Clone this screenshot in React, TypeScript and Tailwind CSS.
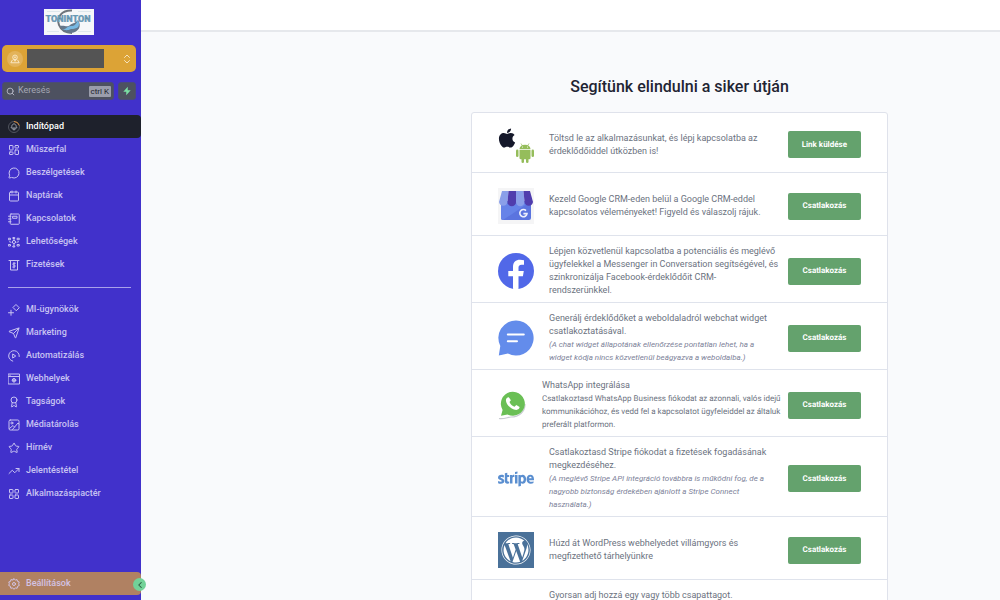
import type { ReactNode } from "react";
import {
  LayoutDashboard,
  MessageCircle,
  Calendar,
  Send,
  Award,
  Star,
  TrendingUp,
  LayoutGrid,
  Search,
  ChevronsUpDown,
  ChevronLeft,
} from "lucide-react";
import { FaApple, FaStripe, FaWordpress } from "react-icons/fa";

function Glyph({ children }: { children: ReactNode }) {
  return (
    <svg
      viewBox="0 0 24 24"
      className="size-3"
      fill="none"
      stroke="currentColor"
      strokeWidth="2"
      strokeLinecap="round"
      strokeLinejoin="round"
      aria-hidden="true"
    >
      {children}
    </svg>
  );
}

const icons: Record<string, ReactNode> = {
  launch: (
    <svg viewBox="0 0 24 24" className="size-3" fill="none" aria-hidden="true">
      <circle cx="12" cy="12" r="11" stroke="#5d616b" strokeWidth="1.6" />
      <path d="M12 1a11 11 0 0 1 10.5 8" stroke="#d98a3c" strokeWidth="2" />
      <path
        d="M12 5.500c3 1 4.500 3 4.500 5.500 1 .8 1.200 1.800 1 3h-11c-.2-1.200 0-2.200 1-3 0-2.500 1.500-4.500 4.500-5.500zM10 14v3.500h4V14"
        stroke="#a9adb8"
        strokeWidth="1.700"
      />
    </svg>
  ),
  contacts: (
    <Glyph>
      <rect x="4.500" y="2" width="18" height="20.500" rx="1.500" />
      <path d="M1 6.500h5M1 12h5M1 17.500h5M10 6.500h8v4h-8z" />
    </Glyph>
  ),
  opportunities: (
    <Glyph>
      <circle cx="12" cy="12" r="3.200" />
      <path d="M12 5v3.500M12 15.500V19M10.500 3h3v2h-3zM10.500 20h3v2h-3zM1.500 4.500h3.500v3H1.500zM19 4.500h3.500v3H19zM1.500 17h3.500v3H1.500zM19 17h3.500v3H19zM3 11.500l3 1M21 11.500l-3 1" />
    </Glyph>
  ),
  payments: (
    <Glyph>
      <path d="M2 3h20M5 3v19h14V3M14.500 8.500h-3a1.700 1.700 0 0 0 0 3.700h1a1.700 1.700 0 0 1 0 3.800h-3M12 7v11" />
    </Glyph>
  ),
  agents: (
    <Glyph>
      <path d="M16.500 1.500 22.500 7.500 16.500 13.500 10.500 7.500zM6 12.500v10M1 17.500h10" />
    </Glyph>
  ),
  automation: (
    <Glyph>
      <path d="M9.500 22.300A10.600 10.600 0 1 1 22.500 13M10 8.300l5.500 3.700-5.500 3.700z" />
    </Glyph>
  ),
  sites: (
    <Glyph>
      <path d="M1 2h22v20H1zM1 7h22" />
      <circle cx="12" cy="14.500" r="3.500" />
      <path d="M8.500 14.500h7M12 11v7M3.500 4.500h1" />
    </Glyph>
  ),
  media: (
    <Glyph>
      <rect x="2" y="2" width="20" height="20" rx="2.500" />
      <circle cx="7.800" cy="8" r="2" />
      <path d="m3 19 7-6 3 3M9 21 20 8l2 2" />
    </Glyph>
  ),
  settings: (
    <Glyph>
      <circle cx="12" cy="12" r="3" />
      <path d="M12 1.500 14.600 4l3.500-.8.9 3.500 3.400 1.200-1 3.500L22.500 15l-3.400 1.700-.7 3.700-3.700-.4L12 22.500 9.300 20l-3.700.4-.7-3.700L1.500 15l1.100-3.600-1-3.500L5 6.700l.9-3.500 3.500.8z" />
    </Glyph>
  ),
};

const primaryNav: { label: string; icon: ReactNode }[] = [
  { label: "Műszerfal", icon: <LayoutDashboard className="size-3" /> },
  { label: "Beszélgetések", icon: <MessageCircle className="size-3" /> },
  { label: "Naptárak", icon: <Calendar className="size-3" /> },
  { label: "Kapcsolatok", icon: icons.contacts },
  { label: "Lehetőségek", icon: icons.opportunities },
  { label: "Fizetések", icon: icons.payments },
];

const secondaryNav: { label: string; icon: ReactNode }[] = [
  { label: "MI-ügynökök", icon: icons.agents },
  { label: "Marketing", icon: <Send className="size-3" /> },
  { label: "Automatizálás", icon: icons.automation },
  { label: "Webhelyek", icon: icons.sites },
  { label: "Tagságok", icon: <Award className="size-3" /> },
  { label: "Médiatárolás", icon: icons.media },
  { label: "Hírnév", icon: <Star className="size-3" /> },
  { label: "Jelentéstétel", icon: <TrendingUp className="size-3" /> },
  { label: "Alkalmazáspiactér", icon: <LayoutGrid className="size-3" /> },
];

function NavItem({ label, icon }: { label: string; icon: ReactNode }) {
  return (
    <a href="#" className="flex h-[23px] items-center gap-1.5 pl-2 font-medium text-[#c8c3f2]">
      {icon}
      {label}
    </a>
  );
}

function BrandLogo() {
  return (
    <svg viewBox="0 0 50 26" className="h-[26px] w-[50px]" role="img" aria-label="Toninton">
      <rect width="50" height="26" fill="#f5f7f9" />
      <path d="M3 2.500h13M34 2.500h13M3 22.500h12M34 22.500h13" stroke="#cfdbe2" strokeWidth="0.6" />
      <path d="M28 1.500C18 1 12 8 15 16c2 5 6 8 13 8" fill="none" stroke="#6d747b" strokeWidth="2" />
      <path d="M16 17c5-1 7 2 10-1 3-2 6-2 8-5 4 6 1 12-7 13-5 0-9-3-11-7z" fill="#64778b" />
      <path d="M18 20c4 1 5-3 9-3s5-2 7-6c3 7-1 9-7 9-4 2-6 1-9 0z" fill="#78b9e3" />
      <text x="24" y="12.500" textAnchor="middle" fontSize="9" fontWeight="900" fill="#6a9fbd" stroke="#536f80" strokeWidth="0.2" className="font-['Roboto',sans-serif]">
        TONINTON
      </text>
    </svg>
  );
}

function Sidebar() {
  return (
    <aside className="relative flex w-[141px] shrink-0 flex-col bg-[#4131cb] text-[9px]">
      <div className="flex justify-center pt-[9px] pr-[3px]">
        <BrandLogo />
      </div>
      <button
        type="button"
        aria-label="Fiók váltása"
        className="mt-2.5 mr-[5px] ml-0.5 flex h-[27px] items-center rounded-[5px] bg-[#dca336] pr-[3px] pl-[5px]"
      >
        <span className="flex size-4 items-center justify-center rounded-full bg-[#e3b35a] text-[#fbeed2]">
          <svg viewBox="0 0 24 24" className="size-2.5" fill="none" stroke="currentColor" strokeWidth="2" aria-hidden="true">
            <circle cx="12" cy="8" r="5.500" />
            <path d="M12 17.500 8.500 12.500M12 17.500l3.500-5M6 14l-4 7h20l-4-7" />
            <circle cx="12" cy="8" r="1.500" />
          </svg>
        </span>
        <span className="ml-1 h-[19px] w-[77px] bg-[#545454]" />
        <ChevronsUpDown className="ml-auto size-3 text-[#f6e3bd]" strokeWidth={2} />
      </button>
      <div className="mt-2.5 mr-[5px] ml-0.5 flex gap-1">
        <label className="flex h-[18px] min-w-0 flex-1 items-center gap-[3px] rounded-[3px] border border-[#4a4b78] bg-[#4d5160] pr-0.5 pl-[3px] text-[#b5b8c4]">
          <Search className="size-[9px] shrink-0" strokeWidth={2.5} />
          <input
            type="search"
            aria-label="Keresés"
            placeholder="Keresés"
            className="w-full min-w-0 bg-transparent text-[9px] outline-none placeholder:text-[#a5a8b4]"
          />
          <kbd className="shrink-0 rounded-[1px] bg-[#9a9dab] px-0.5 font-['Roboto',sans-serif] text-[8px] leading-[11px] text-[#1d202c]">
            ctrl K
          </kbd>
        </label>
        <button
          type="button"
          aria-label="Gyors műveletek"
          className="flex size-[18px] items-center justify-center rounded-[3px] border border-[#4a4b78] bg-[#4d5160]"
        >
          <svg viewBox="0 0 10 10" className="size-2.5" aria-hidden="true">
            <path d="M5.800.8 1.300 5.800h3L4.200 9.200 8.700 4.200h-3z" fill="#7be0a4" />
          </svg>
        </button>
      </div>
      <nav className="mt-[15px] flex flex-1 flex-col">
        <a href="#" aria-current="page" className="flex h-[23px] items-center gap-1.5 rounded-r bg-[#1e212c] pl-2 font-medium text-white">
          {icons.launch}
          Indítópad
        </a>
        {primaryNav.map((item) => (
          <NavItem key={item.label} {...item} />
        ))}
        <hr className="mt-[11px] mr-2.5 mb-2.5 ml-2 border-[#a9a1ea]" />
        {secondaryNav.map((item) => (
          <NavItem key={item.label} {...item} />
        ))}
      </nav>
      <div className="relative mb-[5px]">
        <a href="#" className="flex h-[23px] items-center gap-1.5 rounded-r bg-[#b08162] pl-2 font-medium text-[#d3c3e4]">
          {icons.settings}
          Beállítások
        </a>
        <button
          type="button"
          aria-label="Oldalsáv összecsukása"
          className="absolute top-1.5 -right-[5px] flex size-[13px] items-center justify-center rounded-full bg-[#72d298] text-[#28573c]"
        >
          <ChevronLeft className="size-2.5" strokeWidth={2.5} />
        </button>
      </div>
    </aside>
  );
}

function AppStoresLogo() {
  return (
    <div className="relative size-9">
      <FaApple className="absolute top-0 -left-0.5 size-[22px] text-[#15182a]" />
      <svg viewBox="0 0 36 40" className="absolute right-0 bottom-0 h-5 w-[18px]" fill="#95bd5b" aria-hidden="true">
        <path d="M7 12C7.500 7 11 3.500 18 3.500S28.500 7 29 12z" />
        <path d="m10 1 3 5M26 1l-3 5" stroke="#95bd5b" strokeWidth="1.400" />
        <path d="M7 13.500h22V30a2.500 2.500 0 0 1-2.500 2.500h-17A2.500 2.500 0 0 1 7 30z" />
        <rect x="0" y="13" width="5" height="15" rx="2.500" />
        <rect x="31" y="13" width="5" height="15" rx="2.500" />
        <rect x="11" y="28" width="5" height="12" rx="2.500" />
        <rect x="20" y="28" width="5" height="12" rx="2.500" />
        <circle cx="13" cy="8" r="1.100" fill="#fff" />
        <circle cx="23" cy="8" r="1.100" fill="#fff" />
      </svg>
    </div>
  );
}

function GoogleBusinessLogo() {
  return (
    <svg viewBox="0 0 36 36" className="size-9" aria-hidden="true">
      <rect width="36" height="36" fill="#f5f5f6" />
      <path d="M3 13h30v17a2 2 0 0 1-2 2H5a2 2 0 0 1-2-2z" fill="#5b74df" />
      <path d="M3 16h26L5 32a2 2 0 0 1-2-2z" fill="#6683e8" />
      <path d="M4 3h6.500L9.500 14a4.300 4.300 0 0 1-8.500 0z" fill="#8a9fe9" />
      <path d="M10.500 3H18v11a4.200 4.200 0 0 1-8.500 0z" fill="#503dad" />
      <path d="M18 3h7.500l1 11a4.200 4.200 0 0 1-8.500 0z" fill="#8a9fe9" />
      <path d="M25.500 3H32l3 11a4.300 4.300 0 0 1-8.500 0z" fill="#503dad" />
      <path d="M28 22.600a3.600 3.600 0 1 0 1 3h-3.600" fill="none" stroke="#eef1fc" strokeWidth="1.600" />
    </svg>
  );
}

function FacebookLogo() {
  return (
    <svg viewBox="0 0 36 36" className="size-9" aria-hidden="true">
      <circle cx="18" cy="18" r="18" fill="#5168e8" />
      <path d="M15 35.800V23.300h-4.700V18H15v-4c0-4.700 2.800-7.200 7-7.200 1.600 0 3 .2 4 .4v4.500h-2.400c-2.400 0-3.100 1.400-3.100 3V18h5.300l-.9 5.300h-4.400v12.500c-1.800.3-3.700.3-5.500 0z" fill="#fff" />
    </svg>
  );
}

function ChatLogo() {
  return (
    <svg viewBox="0 0 36 36" className="size-9" aria-hidden="true">
      <path d="M18 .5a17.500 17.500 0 1 1-8 33L.8 35.500 2.300 26A17.500 17.500 0 0 1 18 .5z" fill="#638ceb" />
      <path d="M9.800 14.500h16M9.800 21.300H19" stroke="#fff" strokeWidth="2" strokeLinecap="round" />
    </svg>
  );
}

function WhatsappLogo() {
  return (
    <svg viewBox="0 0 29 30" className="h-[30px] w-[29px]" aria-hidden="true">
      <path d="M1 28.500c5 1 9-1.500 12-1.500 8 0 14-5 14-13" fill="none" stroke="#c9ccd2" strokeWidth="1.200" />
      <path d="M3 25.800 4.600 20A12 12 0 1 1 9.500 24.500z" fill="#6abf55" />
      <path d="M10.800 7.300c-.9-.3-2.900 1-2.900 3 0 4.200 5.400 9.600 10.400 9.600 2 0 3.400-1.500 3.300-3l-3.300-1.900-1.800 1.800c-2-.6-4.300-2.800-5-4.800l1.400-1.700z" fill="#fff" />
    </svg>
  );
}

function WordpressLogo() {
  return (
    <span className="flex size-9 items-center justify-center bg-[#4a7199]">
      <FaWordpress className="size-[30px] text-white" />
    </span>
  );
}

type Row = {
  logo: ReactNode;
  text: string;
  note?: string;
  noteStyle?: string;
  action?: string;
  size?: string;
};

const noteItalic = "text-[8px] leading-[13px] whitespace-pre-line italic text-[#7d8299]";
const notePlain = "text-[8px] leading-[13px] whitespace-pre-line text-[#6b7280] [text-rendering:geometricPrecision]";

const rows: Row[] = [
  {
    logo: <AppStoresLogo />,
    text: "Töltsd le az alkalmazásunkat, és lépj kapcsolatba az\nérdeklődőiddel útközben is!",
    action: "Link küldése",
    size: "items-center min-h-[60px]",
  },
  {
    logo: <GoogleBusinessLogo />,
    text: "Kezeld Google CRM-eden belül a Google CRM-eddel\nkapcsolatos véleményeket! Figyeld és válaszolj rájuk.",
    size: "items-center min-h-[63px]",
  },
  {
    logo: <FacebookLogo />,
    text: "Lépjen közvetlenül kapcsolatba a potenciális és meglévő\nügyfelekkel a Messenger in Conversation segítségével, és\nszinkronizálja Facebook-érdeklődőit CRM-\nrendszerünkkel.",
  },
  {
    logo: <ChatLogo />,
    text: "Generálj érdeklődőket a weboldaladról webchat widget\ncsatlakoztatásával.",
    note: "(A chat widget állapotának ellenőrzése pontatlan lehet, ha a\nwidget kódja nincs közvetlenül beágyazva a weboldalba.)",
    noteStyle: noteItalic,
  },
  {
    logo: <WhatsappLogo />,
    text: "WhatsApp integrálása",
    note: "Csatlakoztasd WhatsApp Business fiókodat az azonnali, valós idejű\nkommunikációhoz, és vedd fel a kapcsolatot ügyfeleiddel az általuk\npreferált platformon.",
    noteStyle: notePlain,
  },
  {
    logo: <FaStripe className="size-9 text-[#5b8fd0]" aria-hidden="true" />,
    text: "Csatlakoztasd Stripe fiókodat a fizetések fogadásának\nmegkezdéséhez.",
    note: "(A meglévő Stripe API integráció továbbra is működni fog, de a\nnagyobb biztonság érdekében ajánlott a Stripe Connect\nhasználata.)",
    noteStyle: noteItalic,
  },
  {
    logo: <WordpressLogo />,
    text: "Húzd át WordPress webhelyedet villámgyors és\nmegfizethető tárhelyünkre",
    size: "items-center min-h-[63px]",
  },
  {
    logo: <div className="size-9" />,
    text: "Gyorsan adj hozzá egy vagy több csapattagot.",
    size: "items-start min-h-20",
  },
];

function SetupRow({ logo, text, note, noteStyle, action = "Csatlakozás", size = "items-center" }: Row) {
  return (
    <li className={`flex px-[26px] pt-[9px] pb-[5px] ${size}`}>
      <div className="mr-[15px] shrink-0">{logo}</div>
      <div className="min-w-0 flex-1">
        <p className="text-[9px] leading-[13px] whitespace-pre-line text-[#6b7280]">{text}</p>
        {note && <p className={noteStyle}>{note}</p>}
      </div>
      <button
        type="button"
        className="ml-1.5 h-[27px] min-w-[73px] shrink-0 self-center rounded-[2px] bg-[#64a26d] px-3.5 text-[8px] font-bold text-white [text-rendering:geometricPrecision]"
      >
        {action}
      </button>
    </li>
  );
}

export default function App() {
  return (
    <div className="flex h-screen overflow-hidden bg-[#f9fafc] font-['Roboto',sans-serif]">
      <Sidebar />
      <div className="flex min-w-0 flex-1 flex-col">
        <header className="h-8 shrink-0 border-b-2 border-[#e6e8ec] bg-white" />
        <main className="min-h-0 flex-1 overflow-hidden pr-28">
          <div className="ml-auto w-full max-w-[417px] pt-[43px]">
            <h1 className="text-center text-base leading-6 font-medium text-[#1f2433]">
              Segítünk elindulni a siker útján
            </h1>
            <ul className="mt-[13px] divide-y divide-[#dfe3ec] rounded-[3px] border border-[#dfe2eb] bg-white">
              {rows.map((row) => (
                <SetupRow key={row.text} {...row} />
              ))}
            </ul>
          </div>
        </main>
      </div>
    </div>
  );
}
